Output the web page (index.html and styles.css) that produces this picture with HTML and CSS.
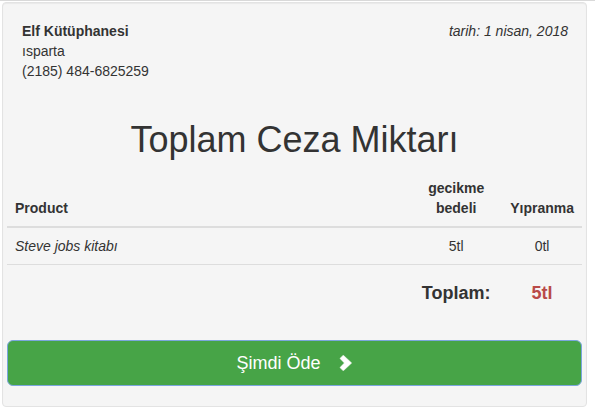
FILE: index.html
```html
<!DOCTYPE html>
<html lang="tr">
<head>
<meta charset="utf-8">
<title>Toplam Ceza Miktarı</title>
<link rel="stylesheet" href="styles.css">
</head>
<body>
<div class="well">
  <div class="header">
    <address class="address">
      <strong>Elf Kütüphanesi</strong><br>
      ısparta<br>
      (2185) 484-6825259
    </address>
    <p class="date"><em>tarih: 1 nisan, 2018</em></p>
  </div>
  <h1 class="title">Toplam Ceza Miktarı</h1>
  <table class="table">
    <thead>
      <tr>
        <th class="col-product">Product</th>
        <th class="col-fee">gecikme bedeli</th>
        <th class="col-wear">Yıpranma</th>
      </tr>
    </thead>
    <tbody>
      <tr>
        <td class="col-product"><em>Steve jobs kitabı</em></td>
        <td class="col-fee">5tl</td>
        <td class="col-wear">0tl</td>
      </tr>
      <tr class="total-row">
        <td></td>
        <td class="col-fee total-label">Toplam:</td>
        <td class="col-wear total-value">5tl</td>
      </tr>
    </tbody>
  </table>
  <button class="btn-pay" type="button">
    <span>Şimdi Öde</span>
    <svg class="chevron" width="14" height="16" viewBox="0 0 14 16" aria-hidden="true">
      <polygon points="1,3.4 4.3,0.2 12.6,8 4.3,15.8 1,12.6 5.4,8" fill="#fff" stroke="#fff" stroke-width="0.6" stroke-linejoin="round"/>
    </svg>
  </button>
</div>
</body>
</html>
```
FILE: styles.css
```css
html, body {
  margin: 0;
  padding: 0;
}
body {
  background: #fff;
  border-top: 1px solid #d9d9d9;
  font-family: "Liberation Sans", Arial, Helvetica, sans-serif;
  font-size: 14px;
  line-height: 20px;
  color: #333;
}
.well {
  margin: 1px 8px 3px 2px;
  background: #f5f5f5;
  border: 1px solid #e3e3e3;
  border-radius: 4px;
  box-shadow: inset 0 1px 1px rgba(0,0,0,0.05);
  padding: 0 4px 20px;
}
.header {
  display: flex;
  justify-content: space-between;
  align-items: flex-start;
  padding: 18px 14px 0 15px;
}
.address {
  font-style: normal;
  margin: 0;
}
.date {
  margin: 0;
}
.title {
  margin: 39px 0 0;
  font-size: 36px;
  line-height: 40px;
  font-weight: normal;
  text-align: center;
  color: #333;
}
.table {
  width: 100%;
  margin: 10px 0 19px;
  border-collapse: collapse;
}
.table th,
.table td {
  padding: 8px;
  line-height: 20px;
  text-align: left;
}
.table th {
  vertical-align: bottom;
  border-bottom: 2px solid #ddd;
  font-weight: bold;
}
.table td {
  vertical-align: top;
  border-top: 1px solid #ddd;
}
.table .col-fee {
  width: 76px;
  text-align: center;
}
.table .col-wear {
  width: 63px;
  text-align: center;
}
.total-row td {
  padding-top: 18px;
  padding-bottom: 18px;
  font-size: 18px;
  font-weight: bold;
}
.total-value {
  color: #b94a48;
}
.btn-pay {
  display: flex;
  justify-content: center;
  align-items: center;
  width: 100%;
  height: 46px;
  margin: 0;
  padding: 0 16px;
  background: #47a447;
  border: 1px solid #7ba6de;
  border-radius: 6px;
  color: #fff;
  font-family: "Liberation Sans", Arial, Helvetica, sans-serif;
  font-size: 18px;
  line-height: 24px;
  cursor: pointer;
}
.chevron {
  margin-left: 18px;
  display: block;
}
```
